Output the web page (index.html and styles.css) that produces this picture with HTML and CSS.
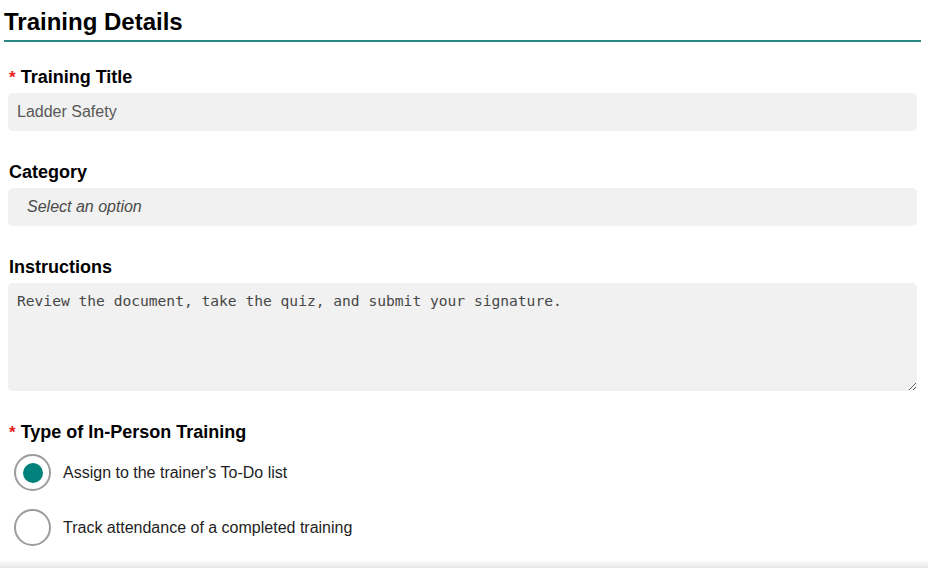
FILE: index.html
```html
<!DOCTYPE html>
<html lang="en">

<head>
    <meta charset="UTF-8">
    <meta name="viewport" content="width=device-width, initial-scale=1.0">
    <title>Training Details</title>
    <link rel="stylesheet" href="styles.css">
</head>

<body>
    <div class="page">
        <h2 class="section-title">Training Details</h2>

        <div class="field">
            <label class="field-label"><span class="req">*</span> Training Title</label>
            <div class="input">Ladder Safety</div>
        </div>

        <div class="field">
            <label class="field-label">Category</label>
            <div class="input select">Select an option</div>
        </div>

        <div class="field">
            <label class="field-label">Instructions</label>
            <textarea class="textarea">Review the document, take the quiz, and submit your signature.</textarea>
        </div>

        <div class="field">
            <label class="field-label"><span class="req">*</span> Type of In-Person Training</label>
            <div class="radio-group">
                <div class="radio-row">
                    <span class="radio checked"></span>
                    <span class="radio-text">Assign to the trainer's To-Do list</span>
                </div>
                <div class="radio-row">
                    <span class="radio"></span>
                    <span class="radio-text">Track attendance of a completed training</span>
                </div>
            </div>
        </div>
    </div>

    <!-- тень нижней панели -->
    <div class="bottom-fade"></div>
</body>

</html>
```

FILE: styles.css
```css
body {
    margin: 0;
    background-color: #ffffff;
    font-family: 'Liberation Sans', Arial, sans-serif;
    color: #111111;
    overflow: hidden;
}

.page {
    padding: 8px 7px 0 4px;
}

.section-title {
    margin: 0 0 25px 0;
    padding-bottom: 4px;
    font-size: 24px;
    line-height: 28px;
    font-weight: bold;
    color: #000000;
    border-bottom: 2px solid #2b8985;
}

.field {
    margin: 0 0 31px 4px;
    width: 909px;
}

.field-label {
    display: block;
    margin: 0 0 5px 1px;
    font-size: 18px;
    line-height: 21px;
    font-weight: bold;
    color: #000000;
}

.req {
    color: #e8201a;
    font-size: 17px;
}

.input {
    box-sizing: border-box;
    height: 38px;
    padding: 0 9px;
    display: flex;
    align-items: center;
    background-color: #f0f1f0;
    border-radius: 5px;
    font-size: 16px;
    color: #585858;
}

.select {
    padding-left: 19px;
    font-style: italic;
    color: #4a4a4a;
}

.textarea {
    display: block;
    box-sizing: border-box;
    width: 100%;
    height: 108px;
    margin: 0;
    padding: 9px 9px;
    border: none;
    outline: none;
    border-radius: 5px;
    background-color: #f0f1f0;
    font-family: 'DejaVu Sans Mono', 'Liberation Mono', monospace;
    font-size: 14.6px;
    color: #474747;
    resize: vertical;
}

.radio-group {
    display: flex;
    flex-direction: column;
    gap: 18px;
    padding-top: 6px;
    margin-left: 6px;
}

.radio-row {
    display: flex;
    align-items: center;
    gap: 12px;
}

.radio {
    box-sizing: border-box;
    width: 37px;
    height: 37px;
    border: 2px solid #9c9c9c;
    border-radius: 50%;
    background-color: #ffffff;
    display: flex;
    align-items: center;
    justify-content: center;
}

.radio.checked::after {
    content: '';
    width: 20px;
    height: 20px;
    border-radius: 50%;
    background-color: #00817c;
}

.radio-text {
    font-size: 16px;
    color: #1e1e1e;
}

.bottom-fade {
    position: absolute;
    left: 0;
    right: 0;
    bottom: 0;
    height: 8px;
    background: linear-gradient(rgba(230, 230, 230, 0), #e6e6e6);
}
```
